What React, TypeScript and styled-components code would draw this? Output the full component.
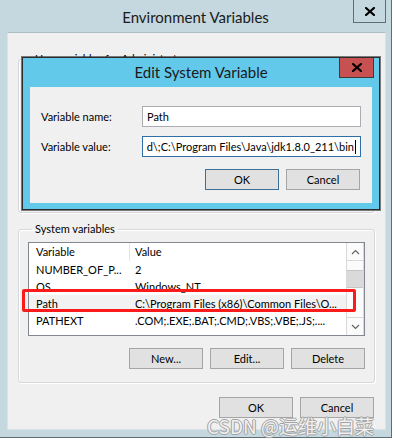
import React from "react";
import styled, { createGlobalStyle } from "styled-components";

const GlobalStyle = createGlobalStyle`
  html, body { margin: 0; padding: 0; background: #ffffff; }
  * { box-sizing: border-box; }
`;

const FONT = `Lato, "Noto Sans", "Liberation Sans", sans-serif`;

const Root = styled.div`
  position: relative;
  width: 395px;
  height: 445px;
  overflow: hidden;
  background: #ffffff;
  font-family: ${FONT};
  font-size: 11px;
  color: #000;
`;

const Window = styled.div`
  width: 392px;
  height: 438px;
  background: #c5d8df;
  border-right: 1px solid #5f6d74;
  border-bottom: 1px solid #5f6d74;
  display: flex;
  flex-direction: column;
`;

const TitleBar = styled.div`
  height: 32px;
  flex: none;
  display: grid;
  grid-template-columns: 1fr auto 1fr;
  align-items: start;
`;

const Title = styled.div<{ $size: number; $top: number }>`
  grid-column: 2;
  font-size: ${(p) => p.$size}px;
  line-height: 20px;
  margin-top: ${(p) => p.$top}px;
  color: #1a1a1a;
  white-space: nowrap;
`;

const CloseButton = styled.div<{ $red?: boolean; $w: number; $h: number; $mr: number }>`
  grid-column: 3;
  justify-self: end;
  width: ${(p) => p.$w}px;
  height: ${(p) => p.$h}px;
  margin-right: ${(p) => p.$mr}px;
  background: ${(p) => (p.$red ? "#c75050" : "#c5d8df")};
  border: 1px solid ${(p) => (p.$red ? "#3c3c3c" : "#5f6d74")};
  border-top: none;
  display: flex;
  align-items: center;
  justify-content: center;
`;

const Client = styled.div`
  margin-left: 7px;
  width: 379px;
  height: 398px;
  background: #f0f0f0;
  border: 1px solid #d9e3e7;
  border-top-color: #aebec5;
  padding: 18px 10px 0 10px;
  display: flex;
  flex-direction: column;
`;

const Group = styled.fieldset<{ $h?: number }>`
  margin: 0;
  min-width: 0;
  border: 1px solid #d6d9db;
  border-radius: 3px;
  padding: 5px 9px 13px 9px;
  box-shadow: inset 1px 1px 0 #ffffff, 1px 1px 0 #ffffff;
  display: flex;
  flex-direction: column;
  ${(p) => (p.$h ? `height: ${p.$h}px;` : "")}
  & + & { margin-top: 8px; }
`;

const Legend = styled.legend`
  font-size: 11px;
  line-height: 16px;
  padding: 0 3px;
  margin-left: 4px;
`;

const ListView = styled.div`
  height: 94px;
  border: 1px solid #828790;
  background: #ffffff;
  display: flex;
  overflow: hidden;
`;

const Table = styled.div`
  flex: 1;
  display: flex;
  flex-direction: column;
`;

const Row = styled.div<{ $header?: boolean; $selected?: boolean }>`
  display: grid;
  grid-template-columns: 101px 1fr;
  height: ${(p) => (p.$header ? 18 : 17)}px;
  line-height: ${(p) => (p.$header ? 18 : 17)}px;
  background: ${(p) => (p.$selected ? "#f2f2f2" : "transparent")};
  white-space: nowrap;
`;

const Cell = styled.div<{ $first?: boolean; $divider?: boolean }>`
  padding-left: ${(p) => (p.$first ? 7 : 5)}px;
  overflow: hidden;
  ${(p) => (p.$divider ? "border-right: 1px solid #e5e5e5;" : "")}
`;

const ScrollBar = styled.div`
  width: 18px;
  flex: none;
  background: #fbfbfb;
  border-left: 1px solid #d9d9d9;
  border-right: 1px solid #d9d9d9;
  display: flex;
  flex-direction: column;
`;

const ArrowBox = styled.div<{ $down?: boolean }>`
  height: 18px;
  flex: none;
  display: flex;
  align-items: center;
  justify-content: center;
  ${(p) => (p.$down ? "margin-top: auto; border-top: 1px solid #d9d9d9;" : "border-bottom: 1px solid #d9d9d9;")}
`;

const Thumb = styled.div`
  margin-top: 9px;
  height: 18px;
  background: #dadada;
  border-top: 1px solid #c6c6c6;
  border-bottom: 1px solid #c6c6c6;
`;

const ButtonRow = styled.div<{ $mt: number; $mr: number }>`
  display: flex;
  justify-content: flex-end;
  gap: 7px;
  margin-top: ${(p) => p.$mt}px;
  margin-right: ${(p) => p.$mr}px;
`;

const Button = styled.div<{ $default?: boolean }>`
  width: 74px;
  height: 21px;
  background: #e1e1e1;
  border: 1px solid ${(p) => (p.$default ? "#3d6f99" : "#a5a5a5")};
  display: flex;
  align-items: center;
  justify-content: center;
  line-height: 19px;
`;

const Dialog = styled.div`
  position: absolute;
  left: 22px;
  top: 57px;
  width: 358px;
  height: 153px;
  background: #63c9eb;
  border: 1px solid #2b2b2b;
  box-shadow: 0 0 0 1px rgba(43, 43, 43, 0.6);
  display: flex;
  flex-direction: column;
`;

const DialogTitleBar = styled(TitleBar)`
  height: 29px;
`;

const DialogClient = styled.div`
  margin: 0 7px 6px 7px;
  flex: 1;
  background: #f0f0f0;
  padding: 19px 10px 0 11px;
  display: flex;
  flex-direction: column;
`;

const Form = styled.div`
  display: grid;
  grid-template-columns: 101px 219px;
  row-gap: 9px;
  align-items: center;
`;

const Label = styled.div`
  white-space: nowrap;
`;

const TextBox = styled.div<{ $focused?: boolean }>`
  height: 21px;
  background: #ffffff;
  border: 1px solid ${(p) => (p.$focused ? "#2f6fa7" : "#abadb3")};
  padding: 0 4px;
  display: flex;
  align-items: center;
  justify-content: ${(p) => (p.$focused ? "flex-end" : "flex-start")};
  overflow: hidden;
  white-space: nowrap;
`;

const Caret = styled.span`
  display: inline-block;
  width: 1px;
  height: 14px;
  background: #000;
  margin-left: 1px;
  flex: none;
`;

const Highlight = styled.div`
  position: absolute;
  left: 22px;
  top: 289px;
  width: 334px;
  height: 23px;
  border: 3px solid #fb1b1b;
  border-radius: 2px;
  pointer-events: none;
`;

const Watermark = styled.div`
  position: absolute;
  left: 207px;
  top: 414px;
  font-family: "Noto Sans CJK SC", "Noto Sans", sans-serif;
  font-size: 19px;
  line-height: 24px;
  color: rgba(255, 255, 255, 0.85);
  text-shadow: 1px 0 0 #a3a3a3, -1px 0 0 #a3a3a3, 0 1px 0 #a3a3a3, 0 -1px 0 #a3a3a3;
  white-space: nowrap;
  pointer-events: none;
`;

const XIcon = () => (
  <svg width="10" height="9" viewBox="0 0 10 9">
    <path d="M1 1 L9 8 M9 1 L1 8" stroke="#000" strokeWidth="2.2" strokeLinecap="square" />
  </svg>
);

const Chevron = ({ down }: { down?: boolean }) => (
  <svg width="9" height="6" viewBox="0 0 9 6">
    <path
      d={down ? "M1 1 L4.5 4.5 L8 1" : "M1 5 L4.5 1.5 L8 5"}
      stroke="#606060"
      strokeWidth="1.1"
      fill="none"
    />
  </svg>
);

const rows = [
  { name: "NUMBER_OF_P...", value: "2" },
  { name: "OS", value: "Windows_NT" },
  { name: "Path", value: "C:\\Program Files (x86)\\Common Files\\O...", selected: true },
  { name: "PATHEXT", value: ".COM;.EXE;.BAT;.CMD;.VBS;.VBE;.JS;...." },
];

export default function App() {
  return (
    <Root>
      <GlobalStyle />
      <Window>
        <TitleBar>
          <Title $size={15} $top={7}>Environment Variables</Title>
          <CloseButton $w={33} $h={23} $mr={5}>
            <XIcon />
          </CloseButton>
        </TitleBar>
        <Client>
          <Group $h={162}>
            <Legend>User variables for Administrator</Legend>
          </Group>
          <Group>
            <Legend>System variables</Legend>
            <ListView>
              <Table>
                <Row $header>
                  <Cell $first $divider>Variable</Cell>
                  <Cell>Value</Cell>
                </Row>
                {rows.map((r) => (
                  <Row key={r.name} $selected={r.selected}>
                    <Cell $first>{r.name}</Cell>
                    <Cell>{r.value}</Cell>
                  </Row>
                ))}
              </Table>
              <ScrollBar>
                <ArrowBox>
                  <Chevron />
                </ArrowBox>
                <Thumb />
                <ArrowBox $down>
                  <Chevron down />
                </ArrowBox>
              </ScrollBar>
            </ListView>
            <ButtonRow $mt={12} $mr={0}>
              <Button>New...</Button>
              <Button>Edit...</Button>
              <Button>Delete</Button>
            </ButtonRow>
          </Group>
          <ButtonRow $mt={14} $mr={1}>
            <Button>OK</Button>
            <Button>Cancel</Button>
          </ButtonRow>
        </Client>
      </Window>

      <Dialog>
        <DialogTitleBar>
          <Title $size={15} $top={4}>Edit System Variable</Title>
          <CloseButton $red $w={35} $h={20} $mr={5}>
            <XIcon />
          </CloseButton>
        </DialogTitleBar>
        <DialogClient>
          <Form>
            <Label>Variable name:</Label>
            <TextBox>Path</TextBox>
            <Label>Variable value:</Label>
            <TextBox $focused>
              <span>d\;C:\Program Files\Java\jdk1.8.0_211\bin</span>
              <Caret />
            </TextBox>
          </Form>
          <ButtonRow $mt={12} $mr={2}>
            <Button $default>OK</Button>
            <Button>Cancel</Button>
          </ButtonRow>
        </DialogClient>
      </Dialog>

      <Highlight />
      <Watermark>CSDN @运维小白菜</Watermark>
    </Root>
  );
}
